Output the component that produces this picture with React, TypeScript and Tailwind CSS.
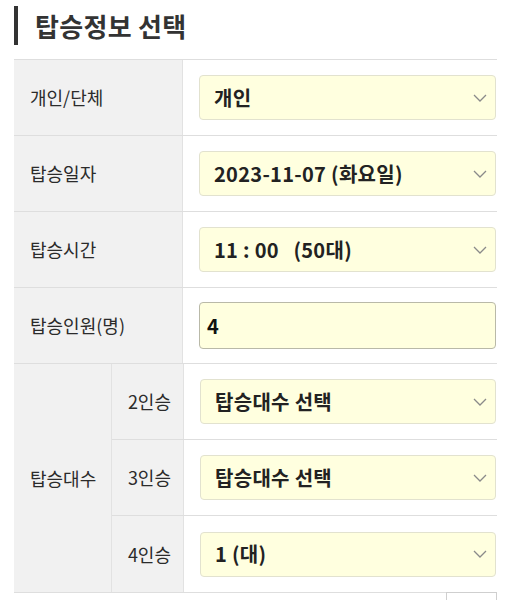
const font = { fontFamily: '"Noto Sans CJK KR", "Noto Sans", sans-serif' };

function Chevron() {
  return (
    <svg width="14" height="8" viewBox="0 0 14 8" className="shrink-0">
      <path d="M1 1l6 6 6-6" fill="none" stroke="#8a8a8a" strokeWidth="1.3" />
    </svg>
  );
}

function SelectBox({ value }: { value: string }) {
  return (
    <div className="flex h-[45px] items-center justify-between rounded-[4px] border border-[#e2e2cf] bg-[#ffffdf] pl-[14px] pr-[8px]">
      <span className="whitespace-pre text-[20px] font-bold tracking-[0.3px] text-[#222]">
        {value}
      </span>
      <Chevron />
    </div>
  );
}

function Row({ label, children }: { label: string; children: React.ReactNode }) {
  return (
    <div className="grid h-[76px] grid-cols-[169px_1fr] border-b border-[#dedede]">
      <div className="flex items-center border-r border-[#e2e2e2] bg-[#f1f1f1] pl-[16px] text-[18px] text-[#2b2b2b]">
        {label}
      </div>
      <div className="flex items-center pl-[16px] pr-[1px]">
        <div className="w-full">{children}</div>
      </div>
    </div>
  );
}

function SubRow({ label, value, last }: { label: string; value: string; last?: boolean }) {
  return (
    <div
      className={
        "grid h-[76px] grid-cols-[72px_1fr] " + (last ? "" : "border-b border-[#dedede]")
      }
    >
      <div className="flex items-center justify-end border-r border-[#e2e2e2] bg-[#f1f1f1] pr-[12px] text-[18px] text-[#2b2b2b]">
        {label}
      </div>
      <div className="flex items-center pl-[16px] pr-[1px]">
        <div className="w-full">
          <SelectBox value={value} />
        </div>
      </div>
    </div>
  );
}

export default function App() {
  return (
    <div className="h-[600px] w-[511px] overflow-hidden bg-white" style={font}>
      <div className="flex h-[59px] items-start pl-[14px] pt-[6px]">
        <div className="flex h-[39px] items-center border-l-[4px] border-[#333] pl-[17px]">
          <h2 className="text-[26px] font-bold leading-none tracking-[0.3px] text-[#333]">
            탑승정보 선택
          </h2>
        </div>
      </div>

      <div className="ml-[14px] w-[483px] border-t border-[#dedede]">
        <Row label="개인/단체">
          <SelectBox value="개인" />
        </Row>
        <Row label="탑승일자">
          <SelectBox value="2023-11-07 (화요일)" />
        </Row>
        <Row label="탑승시간">
          <SelectBox value="11 : 00   (50대)" />
        </Row>
        <Row label="탑승인원(명)">
          <div className="flex h-[47px] items-center rounded-[4px] border border-[#b9b9a8] bg-[#ffffdf] pl-[7px]">
            <span className="text-[20px] font-bold text-[#111]">4</span>
          </div>
        </Row>
        <div className="grid grid-cols-[97px_1fr]">
          <div className="flex items-center bg-[#f1f1f1] pl-[16px] text-[18px] text-[#2b2b2b]">
            탑승대수
          </div>
          <div className="border-l border-[#e2e2e2]">
            <SubRow label="2인승" value="탑승대수 선택" />
            <SubRow label="3인승" value="탑승대수 선택" />
            <SubRow label="4인승" value="1 (대)" last />
          </div>
        </div>
        <div className="flex border-t border-[#dedede]">
          <div className="flex-1" />
          <div className="-mt-[1px] h-[30px] w-[51px] border border-[#cfcfcf] bg-white" />
        </div>
      </div>
    </div>
  );
}
